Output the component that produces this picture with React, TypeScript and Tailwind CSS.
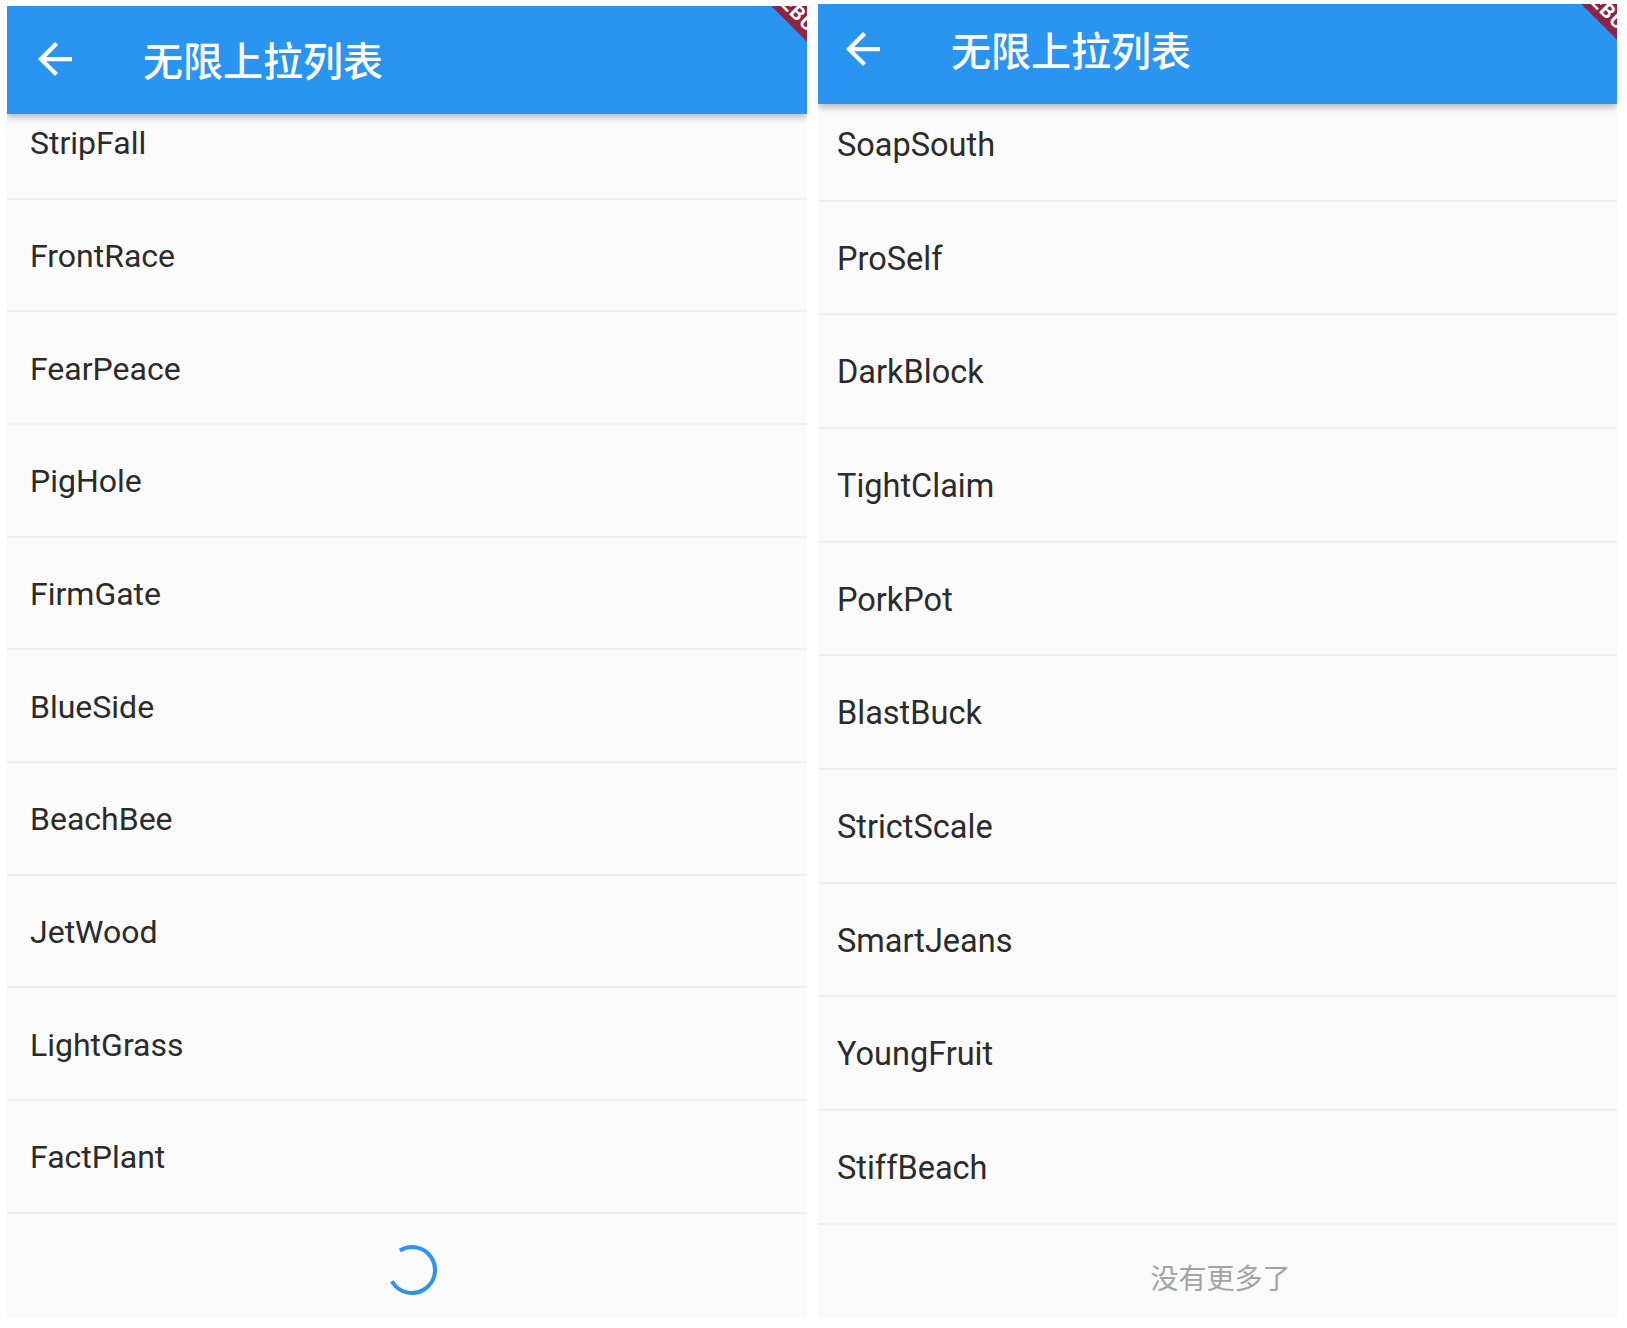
import React from "react";

const leftItems = ["StripFall", "FrontRace", "FearPeace", "PigHole", "FirmGate", "BlueSide", "BeachBee", "JetWood", "LightGrass", "FactPlant"];
const rightItems = ["SoapSouth", "ProSelf", "DarkBlock", "TightClaim", "PorkPot", "BlastBuck", "StrictScale", "SmartJeans", "YoungFruit", "StiffBeach"];

const BackArrow = () => (
  <svg width="34" height="34" viewBox="4 4 16 16" fill="#ffffff">
    <path d="M20 11H7.83l5.59-5.59L12 4l-8 8 8 8 1.41-1.41L7.83 13H20v-2z" />
  </svg>
);

// flutter style debug ribbon in the corner, mostly clipped
const DebugBanner = () => (
  <div className="absolute top-[-6px] right-[-72px] z-20 w-[160px] h-[28px] rotate-45 bg-[#8c2446] text-white text-[20px] font-bold leading-[28px] text-center tracking-[1px] font-['Roboto',sans-serif]">
    DEBUG
  </div>
);

const Spinner = () => (
  <svg width="56" height="56" viewBox="0 0 56 56">
    <circle
      cx="28"
      cy="28"
      r="23"
      fill="none"
      stroke="#2b93ef"
      strokeWidth="4"
      strokeDasharray="108.8 200"
      transform="rotate(-122 28 28)"
    />
  </svg>
);

export default function App() {
  return (
    <div className="w-[1627px] h-[1328px] bg-white flex items-start overflow-hidden">
      {/* left screen: still loading */}
      <div className="relative ml-[7px] mt-[6px] w-[800px] h-[1312px] bg-[#fafafa] overflow-hidden flex flex-col">
        <DebugBanner />
        <div className="relative z-10 h-[108px] shrink-0 bg-[#2a95f1] shadow-[0_3px_7px_rgba(0,0,0,0.28)] flex items-center pl-[31px] pb-[2px]">
          <BackArrow />
          <span className="ml-[71px] text-[40px] font-medium text-white leading-none font-['Noto_Sans_CJK_SC','Noto_Sans',sans-serif]">
            无限上拉列表
          </span>
        </div>
        <div className="flex-1 overflow-hidden">
          <div className="-mt-[27px]">
            {leftItems.map((name) => (
              <div key={name} className="h-[112.67px] flex items-center pl-[23px] pt-[2px] border-b-2 border-[#efefef]">
                <span className="text-[32px] text-[#2b2b2b] font-['Roboto',sans-serif]">{name}</span>
              </div>
            ))}
            <div className="h-[112px] flex items-center justify-center pl-[10px]">
              <Spinner />
            </div>
          </div>
        </div>
      </div>

      {/* right screen: reached the end */}
      <div className="relative ml-[11px] mt-[4px] w-[799px] h-[1314px] bg-[#fafafa] overflow-hidden flex flex-col">
        <DebugBanner />
        <div className="relative z-10 h-[100px] shrink-0 bg-[#2a95f1] shadow-[0_3px_7px_rgba(0,0,0,0.28)] flex items-center pl-[28px] pb-[10px]">
          <BackArrow />
          <span className="ml-[71px] text-[40px] font-medium text-white leading-none font-['Noto_Sans_CJK_SC','Noto_Sans',sans-serif]">
            无限上拉列表
          </span>
        </div>
        <div className="flex-1 overflow-hidden">
          <div className="-mt-[16px]">
            {rightItems.map((name) => (
              <div key={name} className="h-[113.67px] flex items-center pl-[19px] pt-[3px] border-b-2 border-[#efefef]">
                <span className="text-[32.5px] text-[#2b2b2b] font-['Roboto',sans-serif]">{name}</span>
              </div>
            ))}
            <div className="h-[104px] flex items-center justify-center pl-[6px]">
              <span className="text-[28px] text-[#a3a3a3] font-['Noto_Sans_CJK_SC','Noto_Sans',sans-serif]">没有更多了</span>
            </div>
          </div>
        </div>
      </div>
    </div>
  );
}
